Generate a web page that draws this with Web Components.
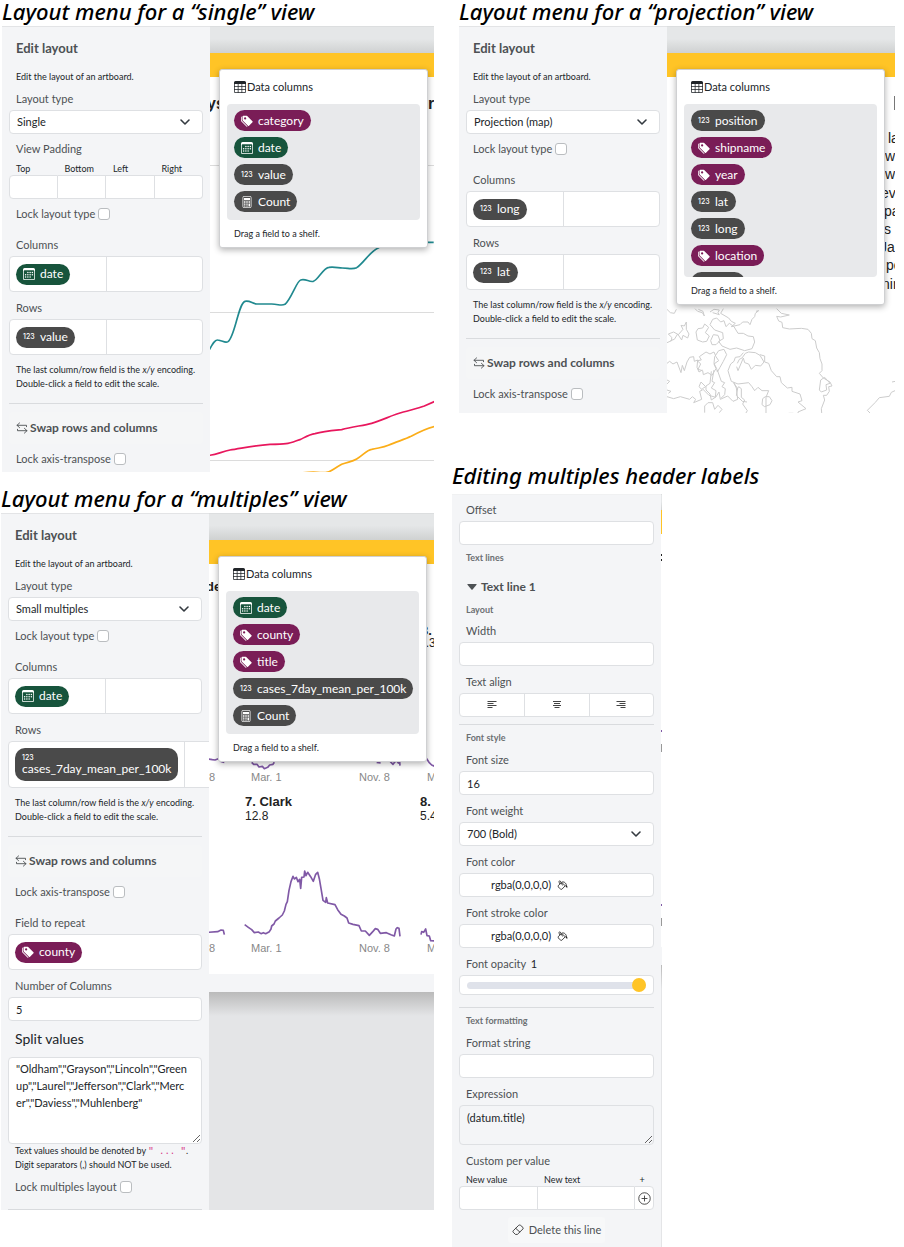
<!DOCTYPE html>
<html lang="en">
<head>
<meta charset="utf-8">
<title>Layout menus</title>
<style>
  body { margin: 0; background: #fff; color: #212529; font: 11px/16px Lato, "Open Sans", sans-serif; }
</style>
</head>
<body>
<layout-overview></layout-overview>

<script>
const ICONS = {
  tag: '<svg viewBox="0 0 16 16" width="12" height="12" fill="currentColor"><path fill-rule="evenodd" d="M2 2a1 1 0 0 1 1-1h4.586a1 1 0 0 1 .707.293l7 7a1 1 0 0 1 0 1.414l-4.586 4.586a1 1 0 0 1-1.414 0l-7-7A1 1 0 0 1 2 6.586zm3.5 4a1.5 1.5 0 1 0 0-3 1.5 1.5 0 0 0 0 3"/><path d="M1.293 7.793A1 1 0 0 1 1 7.086V2a1 1 0 0 0-1 1v4.586a1 1 0 0 0 .293.707l7 7a1 1 0 0 0 1.414 0l.043-.043z"/></svg>',
  date: '<svg viewBox="0 0 16 16" width="12" height="12" fill="currentColor"><path fill-rule="evenodd" d="M14 0H2a2 2 0 0 0-2 2v12a2 2 0 0 0 2 2h12a2 2 0 0 0 2-2V2a2 2 0 0 0-2-2M1 3.857C1 3.384 1.448 3 2 3h12c.552 0 1 .384 1 .857v10.286c0 .473-.448.857-1 .857H2c-.552 0-1-.384-1-.857z"/><path d="M6.500 7a1 1 0 1 0 0-2 1 1 0 0 0 0 2m3 0a1 1 0 1 0 0-2 1 1 0 0 0 0 2m3 0a1 1 0 1 0 0-2 1 1 0 0 0 0 2m-9 3a1 1 0 1 0 0-2 1 1 0 0 0 0 2m3 0a1 1 0 1 0 0-2 1 1 0 0 0 0 2m3 0a1 1 0 1 0 0-2 1 1 0 0 0 0 2m3 0a1 1 0 1 0 0-2 1 1 0 0 0 0 2m-9 3a1 1 0 1 0 0-2 1 1 0 0 0 0 2m3 0a1 1 0 1 0 0-2 1 1 0 0 0 0 2m3 0a1 1 0 1 0 0-2 1 1 0 0 0 0 2"/></svg>',
  count: '<svg viewBox="0 0 16 16" width="12" height="12" fill="none" stroke="currentColor"><rect x="2.500" y=".5" width="11" height="15" rx="1.500"/><path fill="currentColor" stroke="none" d="M4 2.500h8v3H4zM4 7h2v2H4zM7 7h2v2H7zM10 7h2v2h-2zM4 10h2v1.500H4zM7 10h2v1.500H7zM4 12.500h2V14H4zM7 12.500h2V14H7zM10 10h2v4h-2z"/></svg>',
  number: '<span class="num">123</span>',
  table: '<svg viewBox="0 0 16 16" width="12" height="12" fill="currentColor"><path fill-rule="evenodd" d="M0 2a2 2 0 0 1 2-2h12a2 2 0 0 1 2 2v12a2 2 0 0 1-2 2H2a2 2 0 0 1-2-2zm15 2h-4v3h4zm0 4h-4v3h4zm0 4h-4v3h3a1 1 0 0 0 1-1zm-5 3v-3H6v3zm-5 0v-3H1v2a1 1 0 0 0 1 1zm-4-4h4V8H1zm0-4h4V4H1zm5-3v3h4V4zm4 4H6v3h4z"/></svg>',
  swap: '<svg viewBox="0 0 12 12" width="12" height="12" fill="none" stroke="currentColor" stroke-width=".9" stroke-linecap="round" stroke-linejoin="round"><path d="M10.500 4.700V3.300H1M3.600 .9 1 3.300l2.600 2.400M1.500 7.300v1.400H11M8.400 6.300 11 8.700l-2.600 2.400"/></svg>',
  left: '<svg viewBox="0 0 12 12" width="12" height="12" stroke="#444"><path d="M1.500 2.500h9M1.500 4.500h6M1.500 6.500h9M1.500 8.500h5"/></svg>',
  center: '<svg viewBox="0 0 12 12" width="12" height="12" stroke="#444"><path d="M2 2.500h8M3 4.500h6M2 6.500h8M3.500 8.500h5"/></svg>',
  right: '<svg viewBox="0 0 12 12" width="12" height="12" stroke="#444"><path d="M1.500 2.500h9M4.500 4.500h6M1.500 6.500h9M5.500 8.500h5"/></svg>',
  bucket: '<svg viewBox="0 0 12 12" width="11" height="11" fill="none" stroke="#222" stroke-width=".9" stroke-linejoin="round"><path d="M5 2.600 1.200 6.300c-.5 1.300 2.800 4.300 4 3.900L9 6.300zM6.200 6 3.500 1.200c-.8-1-1.600.3-1.200 1.200l.9 2.200M5.500 2.200c3-.6 5 1.800 5 5.300"/><path d="M9 5.500l2.200 1v2.400L9.600 7z" fill="#222" stroke="none"/></svg>',
  eraser: '<svg viewBox="0 0 12 12" width="12" height="12" fill="none" stroke="#333" stroke-width=".9" stroke-linejoin="round"><path d="M6.700 1.300 1.200 6.800c-.4.4-.4 1 0 1.400l2.200 2.200h2L11 4.900c.4-.4.4-1 0-1.400L8.500 1.300c-.5-.4-1.300-.4-1.800 0zM3.700 4.300l4.400 4"/></svg>',
  plus: '<svg viewBox="0 0 12 12" width="13" height="13" fill="none" stroke="#333" stroke-width=".8"><circle cx="6" cy="6" r="5.300"/><path d="M6 3.300v5.400M3.300 6h5.400"/></svg>',
  chevron: '<svg viewBox="0 0 12 12" width="12" height="12" fill="none" stroke="#343a40" stroke-width="1.600" stroke-linecap="round" stroke-linejoin="round"><path d="m2 4 4 4 4-4"/></svg>'
};

const FORM = `
  :host { display: block; }
  * { box-sizing: border-box; }
  label, .label { display: block; padding-left: 7px; color: #4d5154; font-size: 11px; line-height: 16px; }
  input, select, textarea, button { font: inherit; color: #212529; margin: 0; border-radius: 0; }
  .box { width: 100%; height: 24px; margin-top: 3px; background: #fff; border: 1px solid #dee0e3; border-radius: 4px; padding: 0 7px; display: block; outline: 0; }
`;

function define(name, render, css) {
  customElements.define(name, class extends HTMLElement {
    connectedCallback() {
      if (this.shadowRoot) return;
      const root = this.attachShadow({ mode: 'open' });
      root.innerHTML = `<style>${css}</style>${render(this)}`;
    }
  });
}
const at = (el, name) => el.getAttribute(name) || '';

/* Field pill */
define('field-pill', el => `${ICONS[at(el, 'kind')] || ''}<span class="name"><slot></slot></span>`, `
  :host { display: inline-flex; align-items: center; gap: 5px; height: 21px; min-width: 45px; padding: 0 7px; box-sizing: border-box;
    border-radius: 11px; color: #fff; background: #4a4a4a; font-size: 12px; line-height: 16px; white-space: nowrap; flex: none; }
  :host([kind="tag"]) { background: #7a1d57; }
  :host([kind="date"]) { background: #17543c; }
  :host([kind="empty"]) { min-width: 54px; }
  :host([stacked]) { display: inline-block; height: 33px; border-radius: 10px; }
  :host([stacked]) .name { display: block; line-height: 14px; }
  :host([stacked]) .num { display: block; line-height: 9px; padding-top: 5px; }
  svg { flex: none; }
  .num { font: 500 7px/16px Inter, sans-serif; min-width: 12px; }
`);

/* Shelf holding pills */
define('drop-shelf', el => `
  <div class="label" id="l">${at(el, 'label')}</div>
  <div class="shelf" role="list" aria-labelledby="l"><div class="cell"><slot></slot></div>${el.hasAttribute('single') ? '' : '<div class="cell"></div>'}</div>`, FORM + `
  :host { margin-top: 8px; }
  :host([apart]) { margin-top: 15px; }
  .shelf { display: grid; grid-template-columns: minmax(96px, max-content) minmax(96px, 1fr); min-height: 36px; margin-top: 3px;
    background: #fff; border: 1px solid #dee0e3; border-radius: 4px; width: 100%; min-width: max-content; }
  :host([single]) .shelf { grid-template-columns: 1fr; }
  .cell { display: flex; align-items: center; padding: 6px; }
  .cell + .cell { border-left: 1px solid #dee0e3; }
`);

define('check-field', el => `<label for="c">${at(el, 'label')}</label><input id="c" type="checkbox">`, FORM + `
  :host { display: flex; align-items: center; gap: 3px; margin-top: 7px; height: 16px; }
  input { appearance: none; width: 12px; height: 12px; background: #fff; border: 1px solid #babdc0; border-radius: 3px; }
`);

define('select-field', el => `
  <label for="s">${at(el, 'label')}</label>
  <div class="wrap"><select id="s" class="box"><option>${at(el, 'value')}</option></select>${ICONS.chevron}</div>`, FORM + `
  :host { margin-top: 7px; }
  .wrap { display: grid; align-items: center; }
  .wrap > * { grid-area: 1 / 1; }
  select { appearance: none; }
  svg { justify-self: end; margin: 3px 12px 0 0; pointer-events: none; }
`);

define('text-field', el => `
  <label for="t">${at(el, 'label')}</label><input id="t" class="box" type="text" value="${at(el, 'value')}">`, FORM + `
  :host { margin-top: 8px; }
  :host([near]) { margin-top: 7px; }
`);

define('text-area-field', el => `
  <label for="a">${at(el, 'label')}</label><textarea id="a" class="box" spellcheck="false">${el.textContent}</textarea>`, FORM + `
  :host { margin-top: 8px; }
  textarea.box { height: 40px; padding: 4px 7px; line-height: 16px; resize: vertical; background: transparent; }
  :host([large]) label { font-size: 14px; line-height: 20px; color: #212529; }
  :host([large]) textarea.box { height: 87px; margin-top: 8px; line-height: 17px; background: #fff; word-break: break-all; padding: 2px 12px 2px 7px; }
`);

/* View padding: four numbers side by side */
define('padding-fields', () => `
  <div class="label">View Padding</div>
  <div class="grid">${['Top', 'Bottom', 'Left', 'Right'].map(n => `<div><label for="${n}">${n}</label><input id="${n}" type="text"></div>`).join('')}</div>`, FORM + `
  :host { margin-top: 7px; }
  .grid { display: grid; grid-template-columns: repeat(4, 1fr); margin-top: 6px; }
  .grid label { font-size: 9px; line-height: 12px; color: #212529; }
  .grid input { display: block; width: 100%; height: 24px; border: 1px solid #dee0e3; border-left-width: 0; background: #fff; }
  .grid div:first-child input { border-left-width: 1px; border-radius: 4px 0 0 4px; }
  .grid div:last-child input { border-radius: 0 4px 4px 0; }
`);

define('swap-button', () => `<button type="button">${ICONS.swap}Swap rows and columns</button>`, FORM + `
  :host { margin-top: 8px; }
  button { display: flex; align-items: center; gap: 2px; width: 100%; height: 32px; padding: 0 7px; border: 0; border-radius: 4px; background: #f5f6f7; color: #4d5154; font-weight: 700; font-size: 12px; }
`);

define('align-field', () => `
  <div class="label" id="l">Text align</div>
  <div class="box" role="group" aria-labelledby="l">${['left', 'center', 'right'].map(n => `<button type="button" aria-label="Align ${n}">${ICONS[n]}</button>`).join('')}</div>`, FORM + `
  :host { margin-top: 8px; }
  .box { display: grid; grid-template-columns: repeat(3, 1fr); padding: 0; }
  button { display: grid; place-items: center; border: 0; background: none; padding: 0; }
  button + button { border-left: 1px solid #dee0e3; }
`);

define('color-field', el => `
  <div class="label" id="l">${at(el, 'label')}</div>
  <button class="box" type="button" aria-labelledby="l v"><span id="v">rgba(0,0,0,0)</span>${ICONS.bucket}</button>`, FORM + `
  :host { margin-top: 8px; }
  .box { display: flex; align-items: center; gap: 6px; padding-left: 31px; }
`);

define('range-field', () => `
  <label for="r">Font opacity <output>1</output></label>
  <div class="box"><input id="r" type="range" min="0" max="1" step="0.1" value="1"></div>`, FORM + `
  :host { margin-top: 8px; }
  output { color: #212529; margin-left: 2px; }
  .box { display: flex; align-items: center; height: 20px; }
  input { appearance: none; width: 100%; height: 14px; background: none; }
  input::-webkit-slider-runnable-track { height: 7px; border-radius: 4px; background: #dfe2ea; }
  input::-webkit-slider-thumb { appearance: none; width: 14px; height: 14px; margin-top: -4px; border-radius: 7px; background: #ffc426; }
`);

define('per-value-fields', () => `
  <div class="label">Custom per value</div>
  <div class="grid">
    <label for="nv">New value</label><label for="nt">New text</label><span class="add">+</span>
    <input id="nv" type="text"><input id="nt" type="text"><button type="button" aria-label="Add value">${ICONS.plus}</button>
  </div>`, FORM + `
  :host { margin-top: 8px; }
  .grid { display: grid; grid-template-columns: 78fr 97fr 20px; margin-top: 5px; }
  .grid label, .add { font-size: 9px; line-height: 12px; color: #212529; }
  .add { text-align: center; padding-right: 4px; }
  input, button { min-width: 0; height: 24px; border: 1px solid #dee0e3; background: #fff; padding: 0; display: grid; place-items: center; }
  input { border-right-width: 0; }
  #nv { border-radius: 4px 0 0 4px; }
  button { border-radius: 0 4px 4px 0; }
`);

/* Side panel */
define('side-panel', () => '<slot></slot>', `
  :host { display: block; box-sizing: border-box; width: 208px; flex: none; overflow: hidden; background: #f4f5f7; border-top: 1px solid #e3e4e6; padding: 11px 7px 5px; }
  :host([roomy]) { padding-bottom: 11px; }
  :host([flush]) { padding-bottom: 0; }
  :host([plain]) { width: 209px; padding-top: 0; border-top-color: #f0f1f2; }
  ::slotted(h3) { margin: 0; padding-left: 7px; color: #4d5154; font-size: 13px; line-height: 20px; font-weight: 700; }
  ::slotted(p) { margin: 8px 0 0; padding-left: 7px; font-size: 9px; line-height: 14px; white-space: nowrap; }
  ::slotted(p.intro) { margin-top: 12px; }
  ::slotted(p.note) { margin-top: 0; }
  ::slotted(hr) { border: 0; height: 1px; margin: 12px 0 0; background: #d9dbde; }
  ::slotted(hr.tight) { margin-top: 7px; }
  ::slotted(hr.last) { margin-top: 14px; }
  ::slotted(h5) { margin: 7px 0 0; padding-left: 7px; color: #6c7073; font-size: 9px; line-height: 12px; font-weight: 700; }
  ::slotted(h5.sub) { margin-top: 6px; }
`);

define('line-toggle', () => `<button type="button" aria-expanded="true"><svg viewBox="0 0 10 6" width="10" height="6" fill="#4d5154"><path d="M.8 0h8.400q.8 0 .3.800L5.600 5.500q-.6.600-1.200 0L.5.8Q0 0 .8 0"/></svg>Text line 1</button>`, FORM + `
  :host { margin-top: 12px; }
  button { display: flex; align-items: center; gap: 4px; height: 22px; border: 0; background: none; padding: 0 8px; color: #4d5154; font-weight: 700; font-size: 12px; }
`);

define('delete-button', () => `<button type="button">${ICONS.eraser}Delete this line</button>`, FORM + `
  :host { margin-top: 7px; display: flex; justify-content: center; }
  button { display: flex; align-items: center; gap: 5px; height: 26px; border: 0; border-radius: 3px; background: #f7f8f9; padding: 0 4px; color: #4d5154; font-size: 11px; }
`);

/* Floating list of data columns */
define('data-popover', () => `<h4>${ICONS.table}Data columns</h4><div class="list"><slot></slot></div><p>Drag a field to a shelf.</p>`, `
  :host { position: absolute; z-index: 1; top: 43px; left: 9px; width: 209px; box-sizing: border-box; background: #fff; border: 1px solid #cfd0d2; border-radius: 3px;
    box-shadow: 0 2px 6px rgba(0,0,0,.3); padding: 9px 7px 6px; }
  h4 { display: flex; align-items: center; gap: 1px; margin: 0; padding-left: 7px; font-size: 11px; line-height: 16px; font-weight: 400; }
  .list { box-sizing: border-box; display: flex; flex-direction: column; align-items: flex-start; gap: 6px; margin-top: 9px; padding: 6px 7px 8px; background: #e8e9eb; border-radius: 4px; max-height: 173px; overflow: hidden; }
  p { margin: 7px 0 0; padding-left: 7px; font-size: 9px; line-height: 14px; }
`);

/* Canvas behind the panel */
define('art-canvas', () => '<div class="shade"></div><div class="bar"></div><slot></slot>', `
  :host { display: block; position: relative; flex: 1; min-width: 0; background: #fff; }
  .shade { height: 27px; background: linear-gradient(#e5e7e8 45%, #cfd1d1); border-top: 1px solid #dcdedf; box-sizing: border-box; }
  .bar { height: 24px; background: #ffc426; }
  ::slotted(svg) { position: absolute; inset: 0; width: 100%; height: 100%; overflow: hidden; }
  ::slotted(.desk) { position: absolute; inset: 461px 0 0; border-top: 18px solid #f4f5f7; background: linear-gradient(#bababa, #e4e5e7 24px); }
  :host([strip]) { flex: 0 0 1px; }
  :host([strip]) .shade { height: 16px; }
  :host([strip]) ::slotted(.desk) { inset: 453px 0 0; }
`);

/* Titled figure */
define('titled-figure', el => `<h2>${at(el, 'heading')}</h2><div class="body"><slot></slot></div>`, `
  :host { display: block; }
  h2 { margin: 0; padding-bottom: 4px; font: italic 500 22px/22px "Noto Sans", sans-serif; color: #000; white-space: nowrap; }
  :host([spaced]) h2 { padding-bottom: 8px; }
  .body { display: flex; }
`);

define('layout-overview', () => `
<main>
 <div class="column">
  <titled-figure class="a" heading="Layout menu for a “single” view">
    <side-panel>
      <h3>Edit layout</h3>
      <p class="intro">Edit the layout of an artboard.</p>
      <select-field label="Layout type" value="Single"></select-field>
      <padding-fields></padding-fields>
      <check-field label="Lock layout type"></check-field>
      <drop-shelf apart label="Columns"><field-pill kind="date">date</field-pill></drop-shelf>
      <drop-shelf label="Rows"><field-pill kind="number">value</field-pill></drop-shelf>
      <p>The last column/row field is the <i>x/y</i> encoding.<br>Double-click a field to edit the scale.</p>
      <hr>
      <swap-button></swap-button>
      <check-field label="Lock axis-transpose"></check-field>
    </side-panel>
    <art-canvas>
      <svg aria-hidden="true">
        <g stroke="#dcdcdc"><path d="M0 139.500h600M0 286.500h600M0 434.500h600"/></g>
        <g font-family="Liberation Sans, Arial, sans-serif" font-weight="700" font-size="16" fill="#222"><text x="-3" y="83">ys</text><text x="218" y="83">r</text></g>
        <g transform="translate(-5 209) scale(.33333)" fill="none" stroke-width="5" stroke-linejoin="round">
          <path stroke="#20898f" d="M10 350C20 332 28 314 38 315C52 316 60 326 69 320C90 305 100 205 120 199C135 196 142 206 155 207H200C220 207 228 214 240 208C260 190 275 138 287 135C302 130 312 142 325 139C340 134 355 98 372 97C390 95 400 99 412 99C430 99 442 104 455 98C475 85 495 50 518 40C560 10 600 22 686 22"/>
          <path stroke="#e8175d" d="M12 661C35 659 50 650 75 645C110 640 150 631 195 628C220 628 230 628 243 626C260 624 280 614 287 613C305 604 315 598 330 596C355 589 380 587 410 584C440 575 475 572 500 565C535 555 560 540 595 531C620 524 640 520 658 513L690 499"/>
          <path stroke="#fbad18" d="M290 714C310 711 330 709 345 713C375 714 370 711 410 688C430 680 440 681 455 672C475 660 485 645 500 643C520 638 535 638 550 631C575 620 600 613 618 604C640 592 660 581 690 574"/>
        </g>
      </svg>
      <data-popover>
        <field-pill kind="tag">category</field-pill><field-pill kind="date">date</field-pill><field-pill kind="number">value</field-pill><field-pill kind="count">Count</field-pill>
      </data-popover>
    </art-canvas>
  </titled-figure>

  <titled-figure class="c" heading="Layout menu for a “multiples” view">
    <side-panel flush>
      <h3>Edit layout</h3>
      <p class="intro">Edit the layout of an artboard.</p>
      <select-field label="Layout type" value="Small multiples"></select-field>
      <check-field label="Lock layout type"></check-field>
      <drop-shelf apart label="Columns"><field-pill kind="date">date</field-pill></drop-shelf>
      <drop-shelf label="Rows"><field-pill kind="number" stacked>cases_7day_mean_per_100k</field-pill></drop-shelf>
      <p>The last column/row field is the <i>x/y</i> encoding.<br>Double-click a field to edit the scale.</p>
      <hr>
      <swap-button></swap-button>
      <check-field label="Lock axis-transpose"></check-field>
      <drop-shelf apart single label="Field to repeat"><field-pill kind="tag">county</field-pill></drop-shelf>
      <text-field label="Number of Columns" value="5"></text-field>
      <text-area-field large label="Split values">"Oldham","Grayson","Lincoln","Greenup","Laurel","Jefferson","Clark","Mercer","Daviess","Muhlenberg"</text-area-field>
      <p class="note">Text values should be denoted by <code>" ... "</code>.<br>Digit separators (,) should NOT be used.</p>
      <check-field label="Lock multiples layout"></check-field>
      <hr class="last">
    </side-panel>
    <art-canvas>
      <div class="desk"></div>
      <svg aria-hidden="true">
        <g font-family="Liberation Sans, Arial, sans-serif" fill="#222">
          <g font-weight="700"><text x="-3" y="78" font-size="13">de</text><text x="212" y="122" font-size="13">3.</text><text x="36" y="293" font-size="13">7. Clark</text><text x="211" y="293" font-size="13">8. Mercer</text></g>
          <g font-size="12"><text x="210" y="134">4.3</text><text x="36" y="307">12.8</text><text x="211" y="307">5.4</text></g>
          <g font-size="11" fill="#888"><text x="0" y="268">8</text><text x="42" y="268">Mar. 1</text><text x="150" y="268">Nov. 8</text><text x="218" y="268">Mar. 1</text><text x="0" y="439">8</text><text x="42" y="439">Mar. 1</text><text x="150" y="439">Nov. 8</text><text x="218" y="439">Mar. 1</text></g>
        </g>
        <g transform="translate(-4 232) scale(.33333)" fill="none" stroke="#8059a6" stroke-width="5" stroke-linejoin="round">
          <path d="M10 42l12 2 8 1 10-4 8 8 10 3M140 52l6 6 10 0 6 8 10-2 6 7 10-4 6-7 10-2 4-6M515 52l12 2M556 50l8 8 6-8 6-2 4 6 4-4 1 12M664 40l8 12 8 8 12 5"/>
          <path d="M10 562L38 560 48 555 55 556 58 569M119 539L130 547 140 554 148 563 160 561 168 566 175 563 182 566 193 560 198 552 200 543 207 537 211 528 222 519 232 510 238 498 243 478 247 470 252 436 258 410 264 394 268 402 274 397 279 410 284 403 287 430 290 397 297 396 299 378 303 392 308 382 317 395 325 409 332 388 338 382 343 401 348 430 354 466 362 472 364 458 368 474 390 479 398 494 408 508 418 513 426 519 431 534 444 538 462 542 469 558 481 558 493 571 504 559 511 551 518 553 526 565 544 563 558 569 568 573 573 552 577 548 582 550 585 574M648 569L650 560 656 562 662 552 666 572 673 573 677 587 690 588"/>
        </g>
      </svg>
      <data-popover>
        <field-pill kind="date">date</field-pill><field-pill kind="tag">county</field-pill><field-pill kind="tag">title</field-pill><field-pill kind="number">cases_7day_mean_per_100k</field-pill><field-pill kind="count">Count</field-pill>
      </data-popover>
    </art-canvas>
  </titled-figure>
 </div>

 <div class="column second">
  <titled-figure class="b" heading="Layout menu for a “projection” view">
    <side-panel roomy>
      <h3>Edit layout</h3>
      <p class="intro">Edit the layout of an artboard.</p>
      <select-field label="Layout type" value="Projection (map)"></select-field>
      <check-field label="Lock layout type"></check-field>
      <drop-shelf apart label="Columns"><field-pill kind="number">long</field-pill></drop-shelf>
      <drop-shelf label="Rows"><field-pill kind="number">lat</field-pill></drop-shelf>
      <p>The last column/row field is the <i>x/y</i> encoding.<br>Double-click a field to edit the scale.</p>
      <hr>
      <swap-button></swap-button>
      <check-field label="Lock axis-transpose"></check-field>
    </side-panel>
    <art-canvas>
      <svg aria-hidden="true">
        <path d="M227.500 70v14" stroke="#777"/>
        <g font-family="Liberation Sans, Arial, sans-serif" font-size="14" fill="#222">
          <text x="221" y="117">la</text><text x="218" y="135">w</text><text x="218" y="153">we</text><text x="214" y="172">eva</text><text x="217" y="190">pa</text><text x="217" y="208">s</text><text x="213" y="226">Ja</text><text x="219" y="244">pe</text><text x="215" y="263">nin</text>
        </g>
        <g transform="translate(-7 -6) scale(.33333)" fill="none" stroke="#ccc" stroke-width="3" stroke-linejoin="round">
          <path d="M21 868l10 10 12 2 6-12M105 866l8 8 14 4 6 10-4-14-14-6M150 876l12-8 16 2-4 8 4 6-20-6M190 866l-8 14 24 14 8 10 12 6-12 10 26-6 8-8 16 0 6 8 6-16 8-8 2-10 10-8-8 2"/>
          <path d="M350 866l14 14 24 5-26 6-12-2 6 14 10 4 2 16 20 4 36-2 20 3 10 12 2 16 10 6 4 22 8 14 2 18 6 16 0 20-8 8 12 14 20 12 6 12-10 2 2 14-8 12-10 0 4 14-10 26 2 24M478 1110l4-30 12-8 16 18-12 4 2 16-16 6z"/>
          <path d="M21 968l14-6 0-10-10-10 16-6 14 8 14-16-6-12 10 2 6-12 0 22 8 14-4 12-14-8-4 14-12-18-10 16-12 4M112 960l-4-24 6-10 14-2 6-12 12 10-10 16 12 10-8 16-12 2zM152 962l8-18 14 2 6 16-12 12-12 0zM150 914l8-16 12-4 12 12 10-4 6 18 10-10 14 10 12 20 16 0 14 8 16 2 4 16-8 20-22 6-24-8-20 4-24-10-10-14 14-8-2-18-24-8z"/>
          <path d="M21 1030l8-6 10 8 12-6 12 32 4-22 6 16 8-26 8-14 12-2 2 14 10-4-2 22 6 14 10-6M118 1010l6 10-12 2 10 10-8 16 14 4 2 12 14-6 12 8 12-20-6-14 14-10-8-12-6-14-12 6-12-6zM170 1046l-8-16 2-20 12-18 16-4 8 16-10 20-10 18-8 14zM232 1030l6-12 8-4 10-14 10-4 20 2 14 8 12 20-10 12-16-2-12 12-8-16-12-4-4-14-16 38-4-12"/>
          <path d="M210 1072l-6-20 8-20 10-8 4-12 14-2 10-12M300 1004l14 4 0 18 12 4 8 22 16 18 10 0 4 18 18 16 14-2 0 12 24 8 6 20-12 4 24 20-24 10 2 18-16-14-14 0 10 30M210 1072l4 12 20 8 32-4 10 12 8 12 10-10 12 10 20 0-8 20 0 50M162 1050l-6 34 8 4-10 16 14 8-2 20-12 8-4-18-12-12 0-12 12-8 4-36M172 1050l12 34 10 4-8 12 10 6-2 18-10 10M306 1154l2-18 8-6 12 0 8 12-6 12-16 6z"/>
          <path d="M21 1130l20 6 20-6 28 8 8-8 10 8-6 10 24-10-6-24 8-4-10-10 6-14 14 14-10 6 20 20 20 6 10-16 4 22 22-10 16 16 14-6-4-34-8-16 12 18-4 20 18 18 14 2M21 1080l8 4-8 8M21 1110l12 4-8 6M134 1178l0-20 10-10 14 0 6 20 10-12 12 12-8 10M230 1110l6-10 8 6 0 26 10 8-6 12 14 20-6 10M630 1179l-8-8 24-24 12-14 30-4 6-12 22-10M696 1086l10-2"/>
        </g>
      </svg>
      <data-popover>
        <field-pill kind="number">position</field-pill><field-pill kind="tag">shipname</field-pill><field-pill kind="tag">year</field-pill><field-pill kind="number">lat</field-pill><field-pill kind="number">long</field-pill><field-pill kind="tag">location</field-pill><field-pill kind="empty"></field-pill>
      </data-popover>
    </art-canvas>
  </titled-figure>

  <titled-figure class="d" spaced heading="Editing multiples header labels">
    <side-panel plain>
      <text-field near label="Offset"></text-field>
      <h5>Text lines</h5>
      <line-toggle></line-toggle>
      <h5 class="sub">Layout</h5>
      <text-field near label="Width"></text-field>
      <align-field></align-field>
      <hr class="tight">
      <h5>Font style</h5>
      <text-field label="Font size" value="16"></text-field>
      <select-field class="even" label="Font weight" value="700 (Bold)"></select-field>
      <color-field label="Font color"></color-field>
      <color-field label="Font stroke color"></color-field>
      <range-field></range-field>
      <hr>
      <h5>Text formatting</h5>
      <text-field label="Format string"></text-field>
      <text-area-field label="Expression">(datum.title)</text-area-field>
      <per-value-fields></per-value-fields>
      <delete-button></delete-button>
    </side-panel>
    <art-canvas strip>
      <div class="desk"></div>
      <svg aria-hidden="true"><path fill="#222" d="M0 60h1v2H0zM0 65h1v2H0z"/><path fill="#8059a6" d="M0 236h1v2H0zM0 410h1v2H0z"/><path fill="#999" d="M0 250h1v8H0zM0 424h1v8H0z"/></svg>
    </art-canvas>
  </titled-figure>
 </div>
</main>`, `
  :host { display: block; }
  main { display: grid; grid-template-columns: minmax(0, 434fr) minmax(0, 443fr); column-gap: 18px; padding-right: 9px; align-items: start; }
  .column { display: flex; flex-direction: column; gap: 15px; }
  .second { gap: 51px; }
  .a { padding-left: 2px; }
  .c { padding-left: 1px; }
  .b { padding-left: 7px; }
  .even { margin-top: 8px; }
  code { font: 9px/12px "Liberation Mono", monospace; color: #d63384; }
`);
</script>
</body>
</html>
